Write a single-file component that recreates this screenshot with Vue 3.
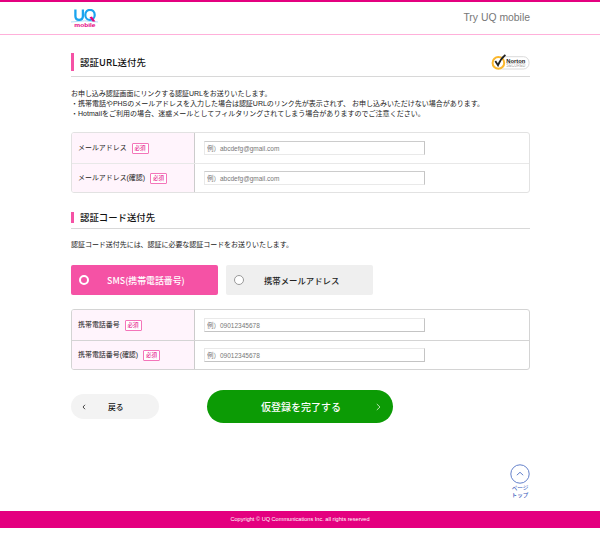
<script setup>
const notes = [
  { text: 'お申し込み認証画面にリンクする認証URLをお送りいたします。', cls: 'n1' },
  { text: '・携帯電話やPHSのメールアドレスを入力した場合は認証URLのリンク先が表示されず、 お申し込みいただけない場合があります。', cls: 'n2' },
  { text: '・Hotmailをご利用の場合、迷惑メールとしてフィルタリングされてしまう場合がありますのでご注意ください。', cls: 'n3' },
]
const mailRows = ['メールアドレス', 'メールアドレス(確認)']
const phoneRows = ['携帯電話番号', '携帯電話番号(確認)']
</script>

<template>
  <div class="page">
    <header class="header">
      <svg class="logo" width="27" height="20" viewBox="0 0 27 20">
        <path d="M0 13Q13.5 10.6 27 13" fill="none" stroke="#9bd9f7" stroke-width=".8" />
        <path d="M4.4 .5V7Q4.4 10.9 8.1 10.9Q11.9 10.9 11.9 7V.5" fill="none" stroke="#1ba4ee" stroke-width="2.3" />
        <ellipse cx="19" cy="5.9" rx="4.7" ry="5" fill="none" stroke="#1ba4ee" stroke-width="2.2" />
        <path d="M18.5 8.2L21 7.6L24.4 12.4H21.6Z" fill="#e4007f" />
        <text x="3.3" y="18" textLength="21.2" lengthAdjust="spacingAndGlyphs" class="logo-sub">mobile</text>
      </svg>
      <span class="brand">Try UQ mobile</span>
    </header>

    <main class="main">
      <div class="heading first">
        <h2>認証URL送付先</h2>
        <svg class="norton" width="39" height="17" viewBox="0 0 39 17">
          <rect x="6" y="2.7" width="32" height="12.3" rx="5.5" fill="#fff" stroke="#d0d0d0" stroke-width=".8" />
          <circle cx="7.4" cy="8.9" r="5.8" fill="#fff" stroke="#fbb72c" stroke-width="2" />
          <path d="M4.3 7.1L7 11.3Q9.3 5.2 14.4 .9" fill="none" stroke="#222" stroke-width="1.8" />
          <text x="15.3" y="8.8" textLength="19" lengthAdjust="spacingAndGlyphs" class="nt">Norton</text>
          <text x="15.3" y="13.2" textLength="19" lengthAdjust="spacingAndGlyphs" class="ns">SECURED</text>
        </svg>
      </div>
      <div class="notes">
        <p v-for="n in notes" :key="n.cls" :class="n.cls">{{ n.text }}</p>
      </div>
      <div class="table mail">
        <div v-for="label in mailRows" :key="label" class="row">
          <div class="label"><span>{{ label }}</span><b>必須</b></div>
          <div class="cell"><input type="text" placeholder="例）abcdefg@gmail.com" /></div>
        </div>
      </div>

      <div class="heading second"><h2>認証コード送付先</h2></div>
      <p class="lead">認証コード送付先には、認証に必要な認証コードをお送りいたします。</p>
      <div class="options">
        <div class="option active"><i></i><span>SMS(携帯電話番号)</span></div>
        <div class="option"><i></i><span>携帯メールアドレス</span></div>
      </div>
      <div class="table phone">
        <div v-for="label in phoneRows" :key="label" class="row">
          <div class="label"><span>{{ label }}</span><b>必須</b></div>
          <div class="cell"><input type="text" placeholder="例）09012345678" /></div>
        </div>
      </div>

      <div class="actions">
        <button class="back">
          <svg width="4" height="6" viewBox="0 0 4 6"><path d="M3 .8L1 3L3 5.2" fill="none" stroke="#333" stroke-width=".9" /></svg>
          <span>戻る</span>
        </button>
        <button class="submit">
          <span>仮登録を完了する</span>
          <svg width="5" height="8" viewBox="0 0 5 8"><path d="M.8 1L4 4L.8 7" fill="none" stroke="#c5e8bf" stroke-width=".9" /></svg>
        </button>
      </div>
      <a class="top">
        <svg width="20" height="20" viewBox="0 0 20 20">
          <circle cx="10" cy="10" r="9.2" fill="#fff" stroke="#5273c4" stroke-width=".9" />
          <path d="M6.8 11.2L10 8.3L13.2 11.2" fill="none" stroke="#5273c4" stroke-width=".9" />
        </svg>
        <span>ページ<br />トップ</span>
      </a>
    </main>
    <footer class="footer">Copyright © UQ Communications Inc. all rights reserved</footer>
  </div>
</template>

<style>
body {
  margin: 0;
  background: #fff;
}
</style>

<style scoped>
* {
  box-sizing: border-box;
}
.page {
  width: 600px;
  height: 536px;
  overflow: hidden;
  color: #222;
  font-family: "Liberation Sans", "Noto Sans CJK JP", sans-serif;
}
p,
h2 {
  margin: 0;
}
.header {
  height: 35px;
  padding: 0 70px 0 71px;
  border-top: 2px solid #e4007f;
  border-bottom: 1px solid #ffb0da;
  display: flex;
  justify-content: space-between;
  align-items: center;
}
.logo {
  margin-top: 1px;
}
.logo-sub {
  font: bold 6.2px "Liberation Sans", sans-serif;
  fill: #e4007f;
}
.brand {
  font-size: 10.4px;
  line-height: 12px;
  color: #777;
}
.main {
  width: 459px;
  height: 476px;
  margin-left: 71px;
  display: flex;
  flex-direction: column;
}
.heading {
  display: flex;
  align-items: center;
  justify-content: space-between;
  border-bottom: 1px solid #d8d8d8;
  flex: none;
}
.heading h2 {
  border-left: 3px solid #f552a5;
  padding-left: 6px;
  font-family: "Noto Sans CJK JP", sans-serif;
  font-size: 9.4px;
  font-weight: 500;
  color: #111;
}
.first {
  margin-top: 18px;
  height: 24px;
  padding-bottom: 5px;
}
.first h2 {
  line-height: 18px;
  letter-spacing: .1px;
}
.second {
  margin-top: 19px;
  height: 17px;
  padding-bottom: 5px;
}
.second h2 {
  line-height: 11px;
}
.norton {
  margin-top: 1px;
}
.nt {
  font: bold 6px "Liberation Sans", sans-serif;
  fill: #222;
}
.ns {
  font: 4.6px "Liberation Sans", sans-serif;
  fill: #aaa;
}
.notes {
  height: 30px;
  margin-top: 12px;
  flex: none;
}
.notes p {
  font-size: 7px;
  line-height: 10px;
  white-space: nowrap;
}
.notes .n1 {
  letter-spacing: -.06px;
}
.notes .n2 {
  letter-spacing: -.02px;
}
.notes .n3 {
  letter-spacing: .03px;
}
.table {
  height: 61px;
  border: 1px solid #e2e2e2;
  border-radius: 3px;
  overflow: hidden;
  flex: none;
}
.mail {
  margin-top: 13px;
}
.phone {
  margin-top: 14px;
  border-color: #d4d4d4;
}
.row {
  height: 30px;
  display: flex;
}
.row + .row {
  height: 29px;
  border-top: 1px solid #e8e8e8;
}
.phone .row + .row {
  border-color: #d4d4d4;
}
.label {
  width: 123px;
  display: flex;
  align-items: center;
  padding-left: 6px;
  background: #fff4fc;
  border-right: 1px solid #ccc;
  font-size: 6.95px;
  line-height: 10px;
}
.label b {
  width: 17px;
  height: 11px;
  margin-left: 5px;
  border: 1px solid #f475ba;
  border-radius: 1px;
  background: #fff;
  color: #e4007f;
  font-size: 5.6px;
  font-weight: 400;
  line-height: 9px;
  text-align: center;
}
.cell {
  flex: 1;
  display: flex;
  align-items: center;
  padding-left: 9px;
}
input {
  width: 221px;
  height: 14px;
  padding: 0 2px;
  border: 1px solid #e9e9e9;
  border-top-color: #ccc;
  border-right-color: #c4c4c4;
  background: #fff;
  font: 6.5px "Liberation Sans", "Noto Sans CJK JP", sans-serif;
}
.phone input {
  border-top-color: #e9e9e9;
  border-bottom-color: #c4c4c4;
}
input::placeholder {
  color: #777;
}
.lead {
  margin-top: 11px;
  font-size: 7px;
  line-height: 10px;
  letter-spacing: -.04px;
  white-space: nowrap;
}
.options {
  display: flex;
  gap: 8px;
  margin-top: 15px;
  flex: none;
}
.option {
  width: 147px;
  height: 30px;
  border-radius: 2px;
  background: #efefef;
  display: flex;
  align-items: center;
  padding-left: 8px;
  font-family: "Noto Sans CJK JP", sans-serif;
  font-size: 8.4px;
  font-weight: 500;
}
.option i {
  width: 10px;
  height: 10px;
  border: 1px solid #999;
  border-radius: 50%;
  background: #fff;
}
.option span {
  margin-left: 20px;
}
.option.active {
  background: #f552a5;
  color: #fff;
  font-size: 8.9px;
}
.option.active i {
  border: 2px solid #fff;
  background: transparent;
}
.option.active span {
  margin-left: 18px;
}
.actions {
  margin-top: 20px;
  display: flex;
  align-items: center;
  gap: 48px;
  flex: none;
}
button {
  border: 0;
  display: flex;
  align-items: center;
  font-family: inherit;
}
.back {
  width: 88px;
  height: 25px;
  border-radius: 13px;
  background: #f3f3f3;
  color: #111;
  padding: 0 0 0 11px;
  font-size: 7.8px;
  font-weight: 500;
}
.back span {
  margin-left: 22px;
}
.submit {
  width: 186px;
  height: 33px;
  border-radius: 17px;
  background: #0c9b05;
  color: #fff;
  padding: 0 12px 0 54px;
  justify-content: space-between;
  font-size: 10px;
  font-weight: 500;
}
.top {
  align-self: flex-end;
  display: flex;
  flex-direction: column;
  align-items: center;
  margin-top: 41px;
  color: #3c60bd;
  font-size: 5.6px;
  font-weight: 500;
  line-height: 7px;
  text-align: center;
}
.top span {
  margin-top: 1px;
}
.footer {
  height: 17px;
  background: #e4007f;
  color: #fff;
  font-size: 5.6px;
  line-height: 17px;
  text-align: center;
}
</style>
